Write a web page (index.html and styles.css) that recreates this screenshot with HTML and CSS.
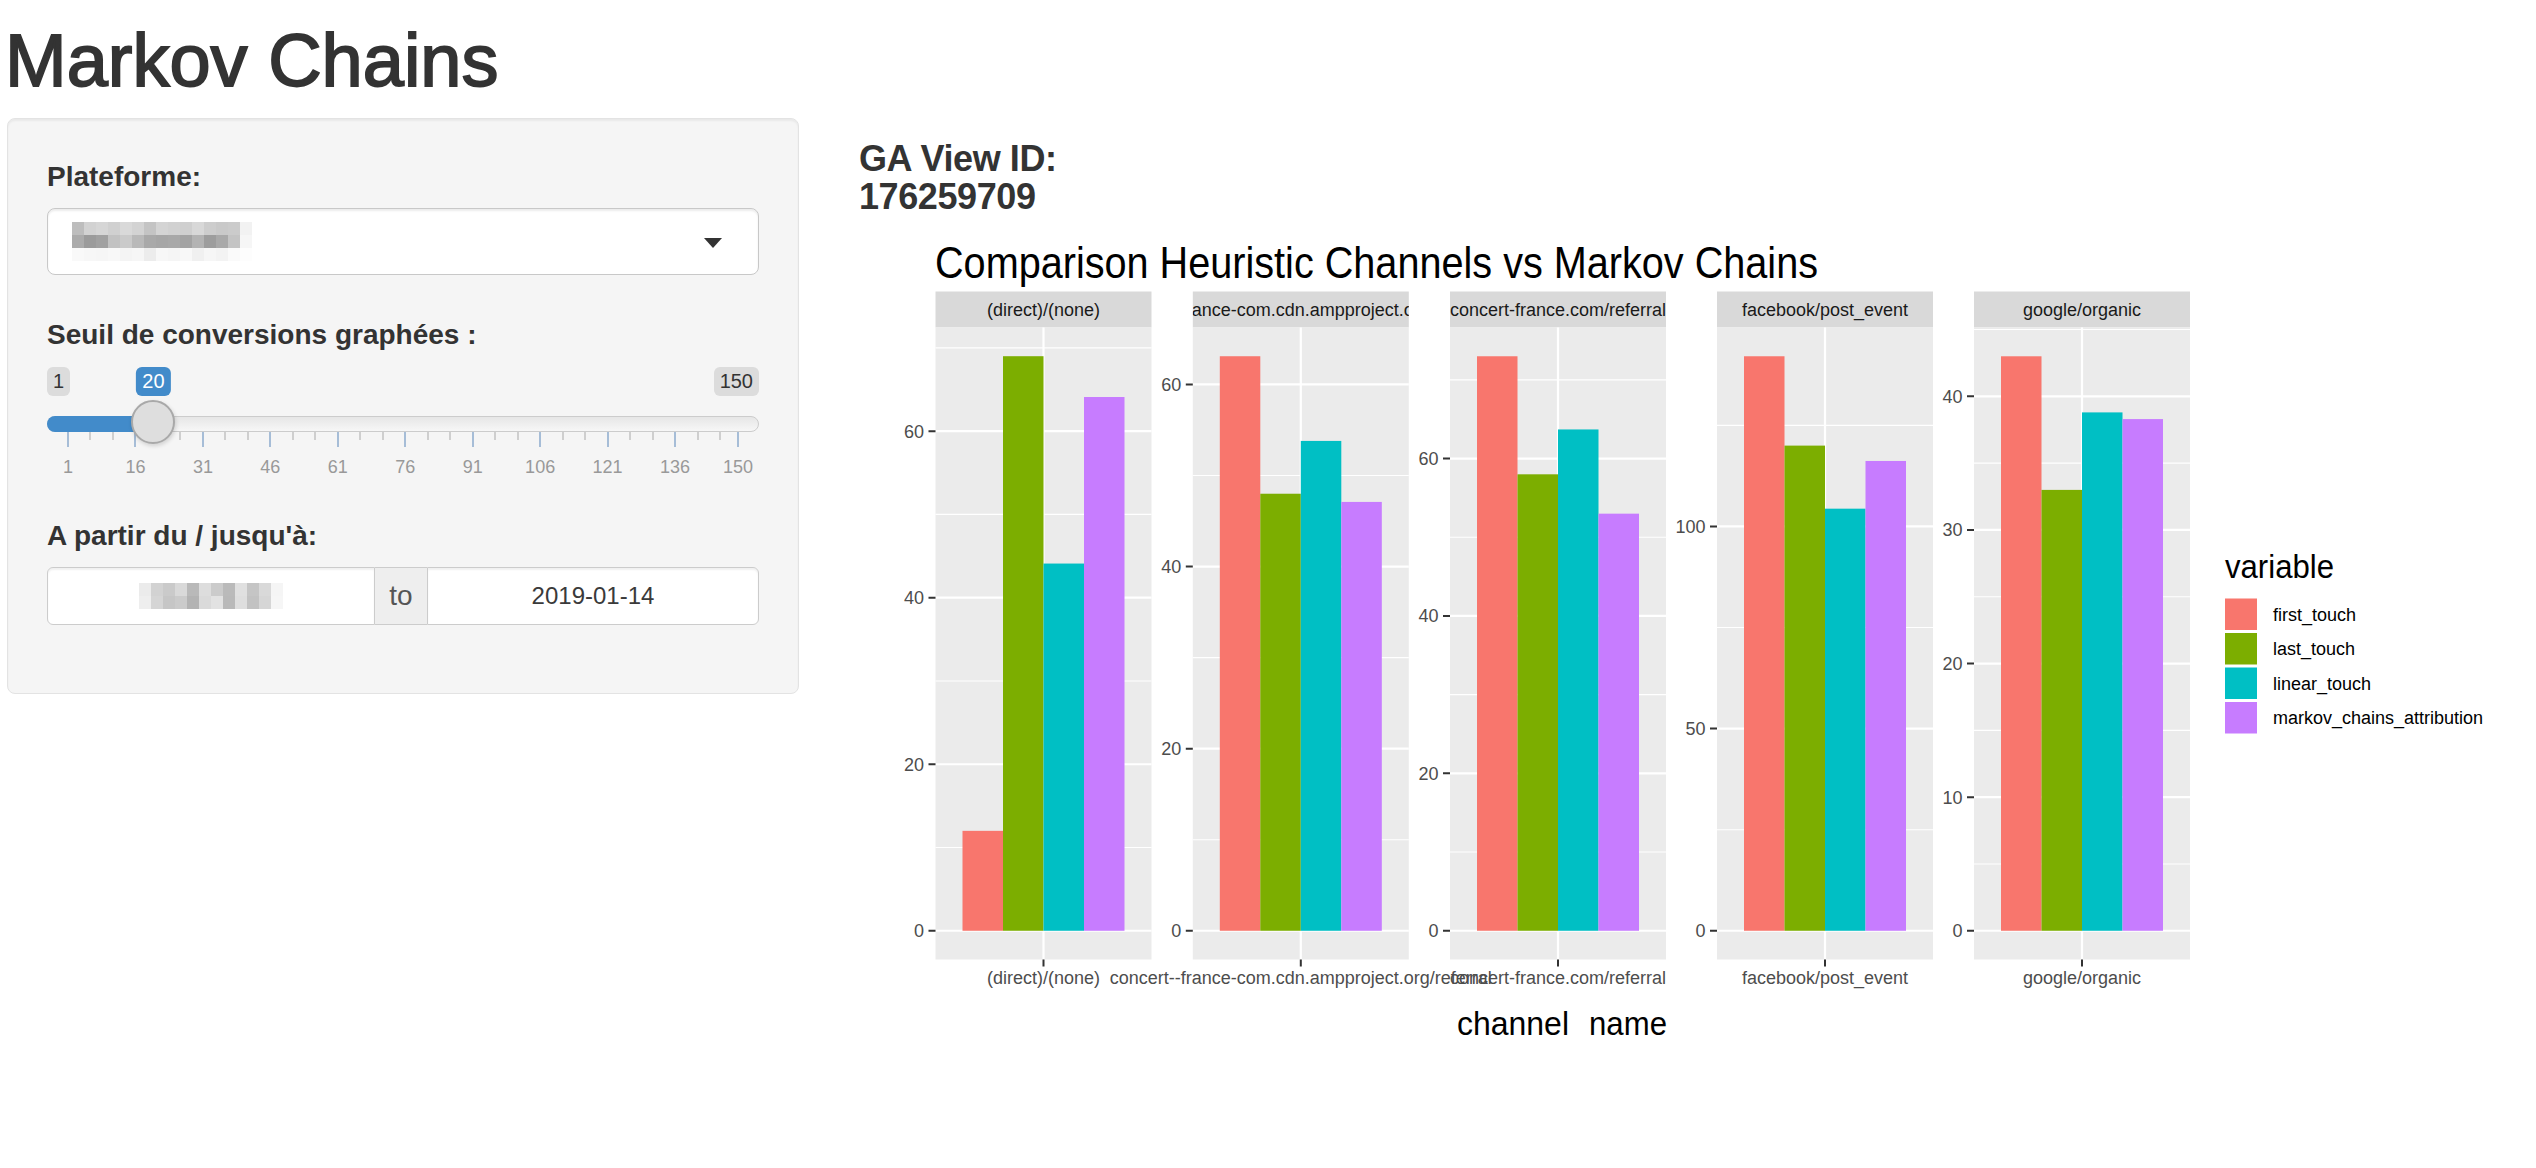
FILE: index.html
```html
<!DOCTYPE html>
<html lang="fr">
<head>
<meta charset="utf-8">
<title>Markov Chains</title>
<link rel="stylesheet" href="styles.css">
</head>
<body>
<div class="page">
  <h1 class="app-title">Markov Chains</h1>
  <div class="layout">
    <aside class="well">
      <div class="form-group fg-select">
        <label class="control-label">Plateforme:</label>
        <div class="select-box">
          <svg class="mosaic" width="180" height="39" viewBox="0 0 180 39">
            <g>
              <rect x="0" y="0" width="12" height="13" fill="#bdbdbd"/><rect x="12" y="0" width="12" height="13" fill="#d2d2d2"/><rect x="24" y="0" width="12" height="13" fill="#d6d6d6"/><rect x="36" y="0" width="12" height="13" fill="#d0d0d0"/><rect x="48" y="0" width="12" height="13" fill="#d9d9d9"/><rect x="60" y="0" width="12" height="13" fill="#d3d3d3"/><rect x="72" y="-4" width="12" height="17" fill="#c4c4c4"/><rect x="84" y="0" width="12" height="13" fill="#d4d4d4"/><rect x="96" y="0" width="12" height="13" fill="#d1d1d1"/><rect x="108" y="0" width="12" height="13" fill="#cfcfcf"/><rect x="120" y="0" width="12" height="13" fill="#d8d8d8"/><rect x="132" y="0" width="12" height="13" fill="#cdcdcd"/><rect x="144" y="0" width="12" height="13" fill="#c9c9c9"/><rect x="156" y="0" width="12" height="13" fill="#cbcbcb"/><rect x="168" y="0" width="12" height="13" fill="#f2f2f2"/>
              <rect x="0" y="13" width="12" height="13" fill="#ababab"/><rect x="12" y="13" width="12" height="13" fill="#9b9b9b"/><rect x="24" y="13" width="12" height="13" fill="#a1a1a1"/><rect x="36" y="13" width="12" height="13" fill="#c2c2c2"/><rect x="48" y="13" width="12" height="13" fill="#cacaca"/><rect x="60" y="13" width="12" height="13" fill="#b9b9b9"/><rect x="72" y="13" width="12" height="13" fill="#a9a9a9"/><rect x="84" y="13" width="12" height="13" fill="#a6a6a6"/><rect x="96" y="13" width="12" height="13" fill="#a8a8a8"/><rect x="108" y="13" width="12" height="13" fill="#a3a3a3"/><rect x="120" y="13" width="12" height="13" fill="#b3b3b3"/><rect x="132" y="13" width="12" height="13" fill="#9d9d9d"/><rect x="144" y="13" width="12" height="13" fill="#a9a9a9"/><rect x="156" y="13" width="12" height="13" fill="#c4c4c4"/><rect x="168" y="13" width="12" height="13" fill="#f6f6f6"/>
              <rect x="0" y="26" width="12" height="13" fill="#f9f9f9"/><rect x="12" y="26" width="12" height="13" fill="#f7f7f7"/><rect x="24" y="26" width="12" height="13" fill="#f6f6f6"/><rect x="36" y="26" width="12" height="13" fill="#f8f8f8"/><rect x="48" y="26" width="12" height="13" fill="#f4f4f4"/><rect x="60" y="26" width="12" height="13" fill="#f6f6f6"/><rect x="72" y="26" width="12" height="13" fill="#ececec"/><rect x="84" y="26" width="12" height="13" fill="#f7f7f7"/><rect x="96" y="26" width="12" height="13" fill="#f5f5f5"/><rect x="108" y="26" width="12" height="13" fill="#f8f8f8"/><rect x="120" y="26" width="12" height="13" fill="#f0f0f0"/><rect x="132" y="26" width="12" height="13" fill="#f6f6f6"/><rect x="144" y="26" width="12" height="13" fill="#f3f3f3"/><rect x="156" y="26" width="12" height="13" fill="#fafafa"/><rect x="168" y="26" width="12" height="13" fill="#fdfdfd"/>
            </g>
          </svg>
          <span class="caret"></span>
        </div>
      </div>

      <div class="form-group fg-slider">
        <label class="control-label">Seuil de conversions graphées :</label>
        <div class="slider">
          <span class="irs-badge irs-min">1</span>
          <span class="irs-badge irs-max">150</span>
          <div class="irs-line"></div>
          <div class="irs-bar" style="width:106.4px"></div>
          <span class="irs-badge irs-single" style="left:106.4px">20</span>

          <span class="tick major" style="left:21px"></span>
          <span class="tick" style="left:43.48px"></span>
          <span class="tick" style="left:65.97px"></span>
          <span class="tick major" style="left:88.45px"></span>
          <span class="tick" style="left:110.93px"></span>
          <span class="tick" style="left:133.42px"></span>
          <span class="tick major" style="left:155.9px"></span>
          <span class="tick" style="left:178.38px"></span>
          <span class="tick" style="left:200.87px"></span>
          <span class="tick major" style="left:223.35px"></span>
          <span class="tick" style="left:245.83px"></span>
          <span class="tick" style="left:268.32px"></span>
          <span class="tick major" style="left:290.8px"></span>
          <span class="tick" style="left:313.28px"></span>
          <span class="tick" style="left:335.77px"></span>
          <span class="tick major" style="left:358.25px"></span>
          <span class="tick" style="left:380.73px"></span>
          <span class="tick" style="left:403.22px"></span>
          <span class="tick major" style="left:425.7px"></span>
          <span class="tick" style="left:448.18px"></span>
          <span class="tick" style="left:470.67px"></span>
          <span class="tick major" style="left:493.15px"></span>
          <span class="tick" style="left:515.63px"></span>
          <span class="tick" style="left:538.12px"></span>
          <span class="tick major" style="left:560.6px"></span>
          <span class="tick" style="left:583.08px"></span>
          <span class="tick" style="left:605.57px"></span>
          <span class="tick major" style="left:628.05px"></span>
          <span class="tick" style="left:650.53px"></span>
          <span class="tick" style="left:673.02px"></span>
          <span class="tick major" style="left:691px"></span>

          <span class="grid-text" style="left:21px">1</span>
          <span class="grid-text" style="left:88.45px">16</span>
          <span class="grid-text" style="left:155.9px">31</span>
          <span class="grid-text" style="left:223.35px">46</span>
          <span class="grid-text" style="left:290.8px">61</span>
          <span class="grid-text" style="left:358.25px">76</span>
          <span class="grid-text" style="left:425.7px">91</span>
          <span class="grid-text" style="left:493.15px">106</span>
          <span class="grid-text" style="left:560.6px">121</span>
          <span class="grid-text" style="left:628.05px">136</span>
          <span class="grid-text" style="left:691px">150</span>

          <span class="irs-handle" style="left:106.4px"></span>
        </div>
      </div>

      <div class="form-group fg-date">
        <label class="control-label">A partir du / jusqu'à:</label>
        <div class="date-range">
          <div class="date-in date-start">
            <svg class="mosaic" width="144" height="26" viewBox="0 0 144 26">
              <rect x="0" y="0" width="12" height="13" fill="#ebebeb"/><rect x="12" y="0" width="12" height="13" fill="#d2d2d2"/><rect x="24" y="0" width="12" height="13" fill="#cacaca"/><rect x="36" y="0" width="12" height="13" fill="#d9d9d9"/><rect x="48" y="0" width="12" height="13" fill="#b9b9b9"/><rect x="60" y="0" width="12" height="13" fill="#dddddd"/><rect x="72" y="0" width="12" height="13" fill="#cbcbcb"/><rect x="84" y="0" width="12" height="13" fill="#bababa"/><rect x="96" y="0" width="12" height="13" fill="#e0e0e0"/><rect x="108" y="0" width="12" height="13" fill="#c5c5c5"/><rect x="120" y="0" width="12" height="13" fill="#d9d9d9"/><rect x="132" y="0" width="12" height="13" fill="#f5f5f5"/>
              <rect x="0" y="13" width="12" height="13" fill="#eeeeee"/><rect x="12" y="13" width="12" height="13" fill="#d5d5d5"/><rect x="24" y="13" width="12" height="13" fill="#c6c6c6"/><rect x="36" y="13" width="12" height="13" fill="#cbcbcb"/><rect x="48" y="13" width="12" height="13" fill="#b3b3b3"/><rect x="60" y="13" width="12" height="13" fill="#dadada"/><rect x="72" y="13" width="12" height="13" fill="#e2e2e2"/><rect x="84" y="13" width="12" height="13" fill="#b9b9b9"/><rect x="96" y="13" width="12" height="13" fill="#dedede"/><rect x="108" y="13" width="12" height="13" fill="#c2c2c2"/><rect x="120" y="13" width="12" height="13" fill="#d6d6d6"/><rect x="132" y="13" width="12" height="13" fill="#f6f6f6"/>
            </svg>
          </div>
          <span class="addon">to</span>
          <div class="date-in date-end">2019-01-14</div>
        </div>
      </div>
    </aside>

    <main class="main">
      <h4 class="ga-id">GA View ID:<br>176259709</h4>
      <svg class="plot" viewBox="859 215.5 1660 940" width="1660" height="940">
        <defs>
          <clipPath id="cs1"><rect x="935.5" y="291" width="216" height="36"/></clipPath>
          <clipPath id="cs2"><rect x="1192.8" y="291" width="216" height="36"/></clipPath>
          <clipPath id="cs3"><rect x="1450" y="291" width="216" height="36"/></clipPath>
          <clipPath id="cs4"><rect x="1717" y="291" width="216" height="36"/></clipPath>
          <clipPath id="cs5"><rect x="1974" y="291" width="216" height="36"/></clipPath>
        </defs>

        <text class="p-title" x="935" y="277" textLength="883" lengthAdjust="spacingAndGlyphs">Comparison Heuristic Channels vs Markov Chains</text>

        <!-- Panel 1 -->
        <g>
          <rect class="strip" x="935.5" y="291" width="216" height="36"/>
          <text class="strip-t" x="1043.5" y="315.5" clip-path="url(#cs1)">(direct)/(none)</text>
          <rect class="pbg" x="935.5" y="327" width="216" height="632"/>
          <path class="minor" d="M935.5 847 H1151.5 M935.5 680.46 H1151.5 M935.5 513.92 H1151.5 M935.5 347.38 H1151.5"/>
          <path class="major" d="M935.5 930.27 H1151.5 M935.5 763.73 H1151.5 M935.5 597.19 H1151.5 M935.5 430.65 H1151.5 M1043.5 327 V959"/>
          <rect class="c1" x="962.5" y="830.35" width="40.5" height="99.92"/>
          <rect class="c2" x="1003" y="355.71" width="40.5" height="574.56"/>
          <rect class="c3" x="1043.5" y="563.05" width="40.5" height="367.22"/>
          <rect class="c4" x="1084" y="396.51" width="40.5" height="533.76"/>
          <path class="tk" d="M928.5 930.27 H935.5 M928.5 763.73 H935.5 M928.5 597.19 H935.5 M928.5 430.65 H935.5 M1043.5 959 V966"/>
          <text class="ytl" x="924" y="936.6">0</text>
          <text class="ytl" x="924" y="770">20</text>
          <text class="ytl" x="924" y="603.5">40</text>
          <text class="ytl" x="924" y="437">60</text>
          <text class="xtl" x="1043.5" y="983">(direct)/(none)</text>
        </g>

        <!-- Panel 2 -->
        <g>
          <rect class="strip" x="1192.8" y="291" width="216" height="36"/>
          <text class="strip-t" x="1300.8" y="315.5" clip-path="url(#cs2)">concert--france-com.cdn.ampproject.org/referral</text>
          <rect class="pbg" x="1192.8" y="327" width="216" height="632"/>
          <path class="minor" d="M1192.8 839.22 H1408.8 M1192.8 657.12 H1408.8 M1192.8 475.02 H1408.8"/>
          <path class="major" d="M1192.8 930.27 H1408.8 M1192.8 748.17 H1408.8 M1192.8 566.07 H1408.8 M1192.8 383.97 H1408.8 M1300.8 327 V959"/>
          <rect class="c1" x="1219.8" y="355.74" width="40.5" height="574.53"/>
          <rect class="c2" x="1260.3" y="493.23" width="40.5" height="437.04"/>
          <rect class="c3" x="1300.8" y="440.42" width="40.5" height="489.85"/>
          <rect class="c4" x="1341.3" y="501.42" width="40.5" height="428.85"/>
          <path class="tk" d="M1185.8 930.27 H1192.8 M1185.8 748.17 H1192.8 M1185.8 566.07 H1192.8 M1185.8 383.97 H1192.8 M1300.8 959 V966"/>
          <text class="ytl" x="1181.3" y="936.6">0</text>
          <text class="ytl" x="1181.3" y="754.5">20</text>
          <text class="ytl" x="1181.3" y="572.4">40</text>
          <text class="ytl" x="1181.3" y="390.3">60</text>
          <text class="xtl" x="1300.8" y="983">concert--france-com.cdn.ampproject.org/referral</text>
        </g>

        <!-- Panel 3 -->
        <g>
          <rect class="strip" x="1450" y="291" width="216" height="36"/>
          <text class="strip-t" x="1558" y="315.5" clip-path="url(#cs3)">concert-france.com/referral</text>
          <rect class="pbg" x="1450" y="327" width="216" height="632"/>
          <path class="minor" d="M1450 851.57 H1666 M1450 694.17 H1666 M1450 536.77 H1666 M1450 379.37 H1666"/>
          <path class="major" d="M1450 930.27 H1666 M1450 772.87 H1666 M1450 615.47 H1666 M1450 458.07 H1666 M1558 327 V959"/>
          <rect class="c1" x="1477" y="355.76" width="40.5" height="574.51"/>
          <rect class="c2" x="1517.5" y="473.81" width="40.5" height="456.46"/>
          <rect class="c3" x="1558" y="428.95" width="40.5" height="501.32"/>
          <rect class="c4" x="1598.5" y="513.16" width="40.5" height="417.11"/>
          <path class="tk" d="M1443 930.27 H1450 M1443 772.87 H1450 M1443 615.47 H1450 M1443 458.07 H1450 M1558 959 V966"/>
          <text class="ytl" x="1438.5" y="936.6">0</text>
          <text class="ytl" x="1438.5" y="779.2">20</text>
          <text class="ytl" x="1438.5" y="621.8">40</text>
          <text class="ytl" x="1438.5" y="464.4">60</text>
          <text class="xtl" x="1558" y="983">concert-france.com/referral</text>
        </g>

        <!-- Panel 4 -->
        <g>
          <rect class="strip" x="1717" y="291" width="216" height="36"/>
          <text class="strip-t" x="1825" y="315.5" clip-path="url(#cs4)">facebook/post_event</text>
          <rect class="pbg" x="1717" y="327" width="216" height="632"/>
          <path class="minor" d="M1717 829.2 H1933 M1717 627.05 H1933 M1717 424.9 H1933"/>
          <path class="major" d="M1717 930.27 H1933 M1717 728.12 H1933 M1717 525.97 H1933 M1825 327 V959"/>
          <rect class="c1" x="1744" y="355.76" width="40.5" height="574.51"/>
          <rect class="c2" x="1784.5" y="445.11" width="40.5" height="485.16"/>
          <rect class="c3" x="1825" y="508.18" width="40.5" height="422.09"/>
          <rect class="c4" x="1865.5" y="460.47" width="40.5" height="469.8"/>
          <path class="tk" d="M1710 930.27 H1717 M1710 728.12 H1717 M1710 525.97 H1717 M1825 959 V966"/>
          <text class="ytl" x="1705.5" y="936.6">0</text>
          <text class="ytl" x="1705.5" y="734.4">50</text>
          <text class="ytl" x="1705.5" y="532.3">100</text>
          <text class="xtl" x="1825" y="983">facebook/post_event</text>
        </g>

        <!-- Panel 5 -->
        <g>
          <rect class="strip" x="1974" y="291" width="216" height="36"/>
          <text class="strip-t" x="2082" y="315.5" clip-path="url(#cs5)">google/organic</text>
          <rect class="pbg" x="1974" y="327" width="216" height="632"/>
          <path class="minor" d="M1974 863.47 H2190 M1974 729.87 H2190 M1974 596.27 H2190 M1974 462.67 H2190 M1974 329.07 H2190"/>
          <path class="major" d="M1974 930.27 H2190 M1974 796.67 H2190 M1974 663.07 H2190 M1974 529.47 H2190 M1974 395.87 H2190 M2082 327 V959"/>
          <rect class="c1" x="2001" y="355.79" width="40.5" height="574.48"/>
          <rect class="c2" x="2041.5" y="489.39" width="40.5" height="440.88"/>
          <rect class="c3" x="2082" y="411.9" width="40.5" height="518.37"/>
          <rect class="c4" x="2122.5" y="418.58" width="40.5" height="511.69"/>
          <path class="tk" d="M1967 930.27 H1974 M1967 796.67 H1974 M1967 663.07 H1974 M1967 529.47 H1974 M1967 395.87 H1974 M2082 959 V966"/>
          <text class="ytl" x="1962.5" y="936.6">0</text>
          <text class="ytl" x="1962.5" y="803">10</text>
          <text class="ytl" x="1962.5" y="669.4">20</text>
          <text class="ytl" x="1962.5" y="535.8">30</text>
          <text class="ytl" x="1962.5" y="402.2">40</text>
          <text class="xtl" x="2082" y="983">google/organic</text>
        </g>

        <!-- axis title -->
        <text class="ax-title" x="1457" y="1034" textLength="112" lengthAdjust="spacingAndGlyphs">channel</text>
        <text class="ax-title" x="1589" y="1034" textLength="78" lengthAdjust="spacingAndGlyphs">name</text>

        <!-- legend -->
        <text class="lg-title" x="2225" y="577" textLength="109" lengthAdjust="spacingAndGlyphs">variable</text>
        <rect class="c1" x="2225" y="598" width="32" height="31.5"/>
        <rect class="c2" x="2225" y="632.5" width="32" height="31.5"/>
        <rect class="c3" x="2225" y="667" width="32" height="31.5"/>
        <rect class="c4" x="2225" y="701.5" width="32" height="31.5"/>
        <text class="lg-t" x="2273" y="620">first_touch</text>
        <text class="lg-t" x="2273" y="654.5">last_touch</text>
        <text class="lg-t" x="2273" y="689">linear_touch</text>
        <text class="lg-t" x="2273" y="723.5">markov_chains_attribution</text>
      </svg>
    </main>
  </div>
</div>
</body>
</html>
```

FILE: styles.css
```css
html, body {
  margin: 0;
  padding: 0;
  background: #ffffff;
}

body {
  font-family: "Liberation Sans", Arial, Helvetica, sans-serif;
  color: #333333;
  overflow: hidden;
}

.page {
  width: 2536px;
}

.app-title {
  font-size: 74px;
  font-weight: 400;
  line-height: 1.1;
  margin: 20px 0 17px 5px;
  color: #333333;
  -webkit-text-stroke: 1.8px #333333;
}

.layout {
  display: flex;
  align-items: flex-start;
}

/* ---------- sidebar well ---------- */
.well {
  box-sizing: border-box;
  width: 792px;
  margin-left: 7px;
  padding: 38px 39px;
  background: #f5f5f5;
  border: 1px solid #e3e3e3;
  border-radius: 8px;
  box-shadow: inset 0 2px 2px rgba(0, 0, 0, 0.05);
  flex: none;
}

.control-label {
  display: block;
  font-size: 28px;
  font-weight: 700;
  line-height: 40px;
  margin-bottom: 11px;
  color: #333333;
}

.fg-select { margin-bottom: 40px; }
.fg-slider { margin-bottom: 0; }
.fg-slider .control-label { margin-bottom: 0; }
.fg-date { margin-bottom: 30px; }

/* select */
.select-box {
  position: relative;
  box-sizing: border-box;
  height: 67px;
  border: 1px solid #c8c8c8;
  border-radius: 8px;
  background: #ffffff;
  box-shadow: inset 0 2px 2px rgba(0, 0, 0, 0.075);
  display: flex;
  align-items: center;
  padding-left: 24px;
}

.mosaic {
  display: block;
}

.caret {
  position: absolute;
  right: 36px;
  top: 50%;
  margin-top: -4px;
  width: 0;
  height: 0;
  border-style: solid;
  border-width: 10px 9px 0 9px;
  border-color: #333333 transparent transparent transparent;
}

/* slider */
.slider {
  position: relative;
  height: 161px;
}

.irs-badge {
  position: absolute;
  top: 12px;
  font-size: 20px;
  line-height: 25px;
  padding: 2px 6px;
  border-radius: 6px;
  white-space: nowrap;
}

.irs-min {
  left: 0;
  background: #dcdcdc;
  color: #333333;
}

.irs-max {
  right: 0;
  background: #dcdcdc;
  color: #333333;
}

.irs-single {
  transform: translateX(-50%);
  background: #428bca;
  color: #ffffff;
}

.irs-line {
  position: absolute;
  left: 0;
  right: 0;
  top: 61px;
  height: 16px;
  box-sizing: border-box;
  border: 1px solid #cccccc;
  border-radius: 16px;
  background: linear-gradient(to bottom, #dedede -50%, #ffffff 150%);
}

.irs-bar {
  position: absolute;
  left: 0;
  top: 61px;
  height: 16px;
  background: #428bca;
  border-radius: 16px 0 0 16px;
}

.irs-handle {
  position: absolute;
  top: 44.7px;
  width: 44px;
  height: 44px;
  margin-left: -22px;
  box-sizing: border-box;
  border: 2px solid #a9a9a9;
  border-radius: 50%;
  background: #dedede;
  box-shadow: 1px 2px 4px rgba(0, 0, 0, 0.15);
}

.tick {
  position: absolute;
  top: 77px;
  width: 2px;
  height: 8px;
  margin-left: -1px;
  background: #cfcfcf;
}

.tick.major {
  height: 15px;
  background: #a6bdd7;
}

.grid-text {
  position: absolute;
  top: 102.8px;
  font-size: 18px;
  line-height: 18px;
  color: #999999;
  transform: translateX(-50%);
  white-space: nowrap;
}

/* date range */
.date-range {
  display: flex;
  height: 58px;
}

.date-in {
  box-sizing: border-box;
  background: #ffffff;
  border: 1px solid #cccccc;
  display: flex;
  align-items: center;
  justify-content: center;
  font-size: 24px;
  color: #3a3a3a;
  box-shadow: inset 0 2px 2px rgba(0, 0, 0, 0.06);
}

.date-start {
  width: 328px;
  flex: none;
  border-radius: 6px 0 0 6px;
}

.date-end {
  flex: 1;
  border-radius: 0 6px 6px 0;
}

.addon {
  box-sizing: border-box;
  width: 52px;
  flex: none;
  display: flex;
  align-items: center;
  justify-content: center;
  background: #eeeeee;
  border-top: 1px solid #cccccc;
  border-bottom: 1px solid #cccccc;
  font-size: 28px;
  color: #555555;
}

/* ---------- main ---------- */
.main {
  margin-left: 60px;
  flex: 1;
  min-width: 0;
}

.ga-id {
  margin: 21.5px 0 0 0;
  font-size: 36px;
  font-weight: 700;
  line-height: 38px;
  color: #333333;
  letter-spacing: -0.4px;
}

.plot {
  display: block;
  font-family: "Liberation Sans", Arial, Helvetica, sans-serif;
}

.p-title {
  font-size: 45px;
  fill: #000000;
}

.strip { fill: #d9d9d9; }
.pbg { fill: #ebebeb; }

.minor {
  stroke: #ffffff;
  stroke-width: 1.1;
  fill: none;
}

.major {
  stroke: #ffffff;
  stroke-width: 2.2;
  fill: none;
}

.tk {
  stroke: #333333;
  stroke-width: 2;
  fill: none;
}

.c1 { fill: #f8766d; }
.c2 { fill: #7cae00; }
.c3 { fill: #00bfc4; }
.c4 { fill: #c77cff; }

.strip-t {
  font-size: 18px;
  fill: #1a1a1a;
  text-anchor: middle;
}

.ytl {
  font-size: 18px;
  fill: #4d4d4d;
  text-anchor: end;
}

.xtl {
  font-size: 18px;
  fill: #4d4d4d;
  text-anchor: middle;
}

.ax-title {
  font-size: 33px;
  fill: #000000;
}

.lg-title {
  font-size: 33px;
  fill: #000000;
}

.lg-t {
  font-size: 18px;
  fill: #000000;
}
```
